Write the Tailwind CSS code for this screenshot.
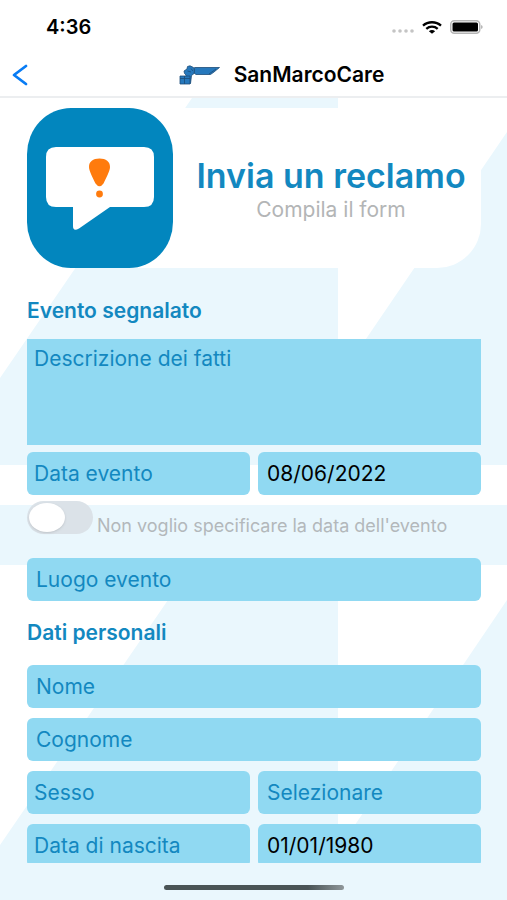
<!DOCTYPE html>
<html lang="it">

<head>
  <meta charset="UTF-8" />
  <meta name="viewport" content="width=device-width, initial-scale=1.0" />
  <title>SanMarcoCare - Invia un reclamo</title>
  <script src="https://cdn.jsdelivr.net/npm/@tailwindcss/browser@4"></script>
</head>

<body class="relative flex h-screen flex-col overflow-hidden bg-white font-['Inter',sans-serif] text-[21px] text-[#1388c0]">

  <!-- Background pattern -->
  <svg class="absolute inset-0 -z-10 h-full w-full" viewBox="0 0 507 900" preserveAspectRatio="none" fill="#eaf7fd" aria-hidden="true">
    <path d="M192 98H338V380L507 132V465H0V378Z" />
    <path d="M0 505H507V565H0Z" />
    <path d="M192 565H338V850L507 600V900H0V845Z" />
  </svg>

  <!-- Status bar -->
  <div class="flex h-[54px] shrink-0 items-center justify-between bg-white pr-6 pl-[46px] text-black">
    <span class="text-xl font-semibold">4:36</span>
    <div class="flex items-center gap-2">
      <svg class="mt-2 h-1 w-[22px]" viewBox="0 0 22 4" fill="#c4c4c4">
        <circle cx="2" cy="2" r="1.8" />
        <circle cx="8" cy="2" r="1.8" />
        <circle cx="14" cy="2" r="1.8" />
        <circle cx="20" cy="2" r="1.8" />
      </svg>
      <svg class="h-[13px] w-5" viewBox="0 0 20 13" fill="none" stroke="#000" stroke-width="2.3">
        <path d="M1 4.6C6 .1 14 .1 19 4.6" />
        <path d="M4.3 7.8C7.5 4.9 12.5 4.9 15.7 7.8" />
        <path d="M10 12.8L6.9 10.3C8.6 8.6 11.4 8.6 13.1 10.3Z" fill="#000" stroke="none" />
      </svg>
      <svg class="h-[14px] w-[33px]" viewBox="0 0 33 14">
        <rect x=".75" y=".75" width="29" height="12.5" rx="3.5" fill="#fff" stroke="#b5b5b5" stroke-width="1.5" />
        <rect x="2.5" y="2.5" width="25.5" height="9" rx="1.5" fill="#000" />
        <path d="M31.3 5c1.6.6 1.6 3.4 0 4Z" fill="#999" />
      </svg>
    </div>
  </div>

  <!-- Navigation bar -->
  <header class="grid h-11 shrink-0 grid-cols-[40px_1fr_40px] items-center border-b-2 border-[#eceef0] bg-white px-3 text-black">
    <button type="button" aria-label="Indietro">
      <svg class="h-[22px] w-4" viewBox="0 0 16 22" fill="none" stroke="#087cf5" stroke-width="2.8" stroke-linecap="round" stroke-linejoin="round">
        <path d="M14 2L2 11L14 20" />
      </svg>
    </button>
    <div class="ml-14 flex items-center justify-center gap-[14px]">
      <svg class="h-5 w-[41px]" viewBox="0 0 41 20" fill="#2678bc" stroke="#1c4c78" stroke-width=".8" stroke-linejoin="round">
        <path d="M15.500 2.500H40.500L38 4.500L35 7L31.500 9.500H17L15 8Z" />
        <path d="M5 6L8 4L8.500 1.500L11 .8L14.500 2.500L15.500 5L15 8.500L12.500 10.500L11.500 18.500H8L7 10L5.500 8.500Z" />
        <path d="M1 11H11V19H1Z" />
        <path d="M1 13.500H11M5.500 11V19M8.500 6L12 7M12 3.500L14 6M30 9L37 4" fill="none" />
      </svg>
      <span class="font-semibold">SanMarcoCare</span>
    </div>
  </header>

  <!-- Form -->
  <main class="flex-1 overflow-y-auto pt-[10px] pr-[26px] pl-[27px] [scrollbar-width:none]">
    <div class="flex h-40 items-center rounded-[44px] bg-white">
      <svg class="h-40 w-[146px] shrink-0" viewBox="0 0 146 160">
        <rect width="146" height="160" rx="44" ry="46" fill="#0286be" />
        <path d="M29 39H117Q127 39 127 49V89Q127 99 117 99H83L52 120.5Q46 124 46 118V99H29Q19 99 19 89V49Q19 39 29 39Z" fill="#fff" />
        <path d="M72.5 50.5C79 50.5 83 53.5 83 59C83 63 79 70 76.5 75.5Q72.5 81 68.5 75.5C66 70 62 63 62 59C62 53.5 66 50.5 72.5 50.5Z" fill="#ff7b0d" />
        <circle cx="72.5" cy="86" r="3.4" fill="#ff7b0d" />
      </svg>
      <div class="flex-1 pt-1 pl-2 text-center">
        <h1 class="text-[34px] leading-10 font-semibold">Invia un reclamo</h1>
        <p class="leading-7 text-[#b3b5b6]">Compila il form</p>
      </div>
    </div>

    <form>
      <h2 class="pt-[29px] pb-[14px] leading-7 font-semibold">Evento segnalato</h2>
      <textarea aria-label="Descrizione dei fatti" placeholder="Descrizione dei fatti" class="block h-[106px] w-full resize-none bg-[#90d9f2] px-[7px] py-1.5 leading-7 placeholder:text-[#1388c0]"></textarea>
      <div class="mt-[7px] grid grid-cols-2 gap-2">
        <label for="data-evento" class="flex h-[43px] items-center rounded-md bg-[#90d9f2] px-[7px]">Data evento</label>
        <input id="data-evento" type="text" value="08/06/2022" class="h-[43px] w-full rounded-md bg-[#90d9f2] px-[9px] text-black" />
      </div>
      <div class="mt-[6px] flex items-end gap-1">
        <input id="no-data" type="checkbox" role="switch" class="h-[33px] w-[66px] shrink-0 appearance-none rounded-full bg-[#dbe2e8] p-0.5 before:block before:h-[29px] before:w-9 before:rounded-[50%] before:bg-white before:shadow checked:bg-[#34c759] checked:before:ml-auto" />
        <label for="no-data" class="text-lg leading-4 text-[#b3b8bb]">Non voglio specificare la data dell'evento</label>
      </div>
      <input type="text" aria-label="Luogo evento" placeholder="Luogo evento" class="mt-6 block h-[43px] w-full rounded-md bg-[#90d9f2] px-[9px] placeholder:text-[#1388c0]" />

      <h2 class="pt-[18px] pb-[18px] leading-7 font-semibold">Dati personali</h2>
      <div class="grid grid-cols-2 gap-x-2 gap-y-[10px]">
        <input type="text" aria-label="Nome" placeholder="Nome" class="col-span-2 h-[43px] w-full rounded-md bg-[#90d9f2] px-[9px] placeholder:text-[#1388c0]" />
        <input type="text" aria-label="Cognome" placeholder="Cognome" class="col-span-2 h-[43px] w-full rounded-md bg-[#90d9f2] px-[9px] placeholder:text-[#1388c0]" />
        <label for="sesso" class="flex h-[43px] items-center rounded-md bg-[#90d9f2] px-[7px]">Sesso</label>
        <select id="sesso" class="h-[43px] w-full appearance-none rounded-md bg-[#90d9f2] px-[9px]">
          <option>Selezionare</option>
          <option>Femmina</option>
          <option>Maschio</option>
        </select>
        <label for="data-nascita" class="flex h-[43px] items-center rounded-md bg-[#90d9f2] px-[7px]">Data di nascita</label>
        <input id="data-nascita" type="text" value="01/01/1980" class="h-[43px] w-full rounded-md bg-[#90d9f2] px-[9px] text-black" />
      </div>
    </form>
  </main>

  <!-- Home indicator -->
  <footer class="flex h-[37px] shrink-0 items-center justify-center pt-3">
    <div class="h-[5px] w-[180px] rounded-full bg-linear-to-r from-[#4a5456] from-80% to-[#8f979a]"></div>
  </footer>
</body>

</html>
